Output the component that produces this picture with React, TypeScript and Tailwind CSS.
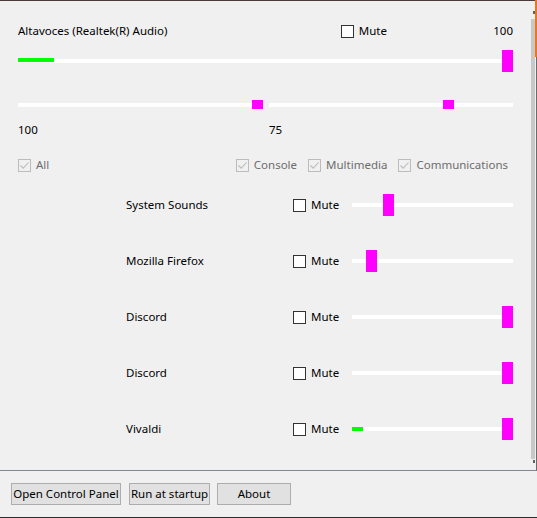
import React from 'react';

interface AppSession {
  name: string;
  thumb: number; // px offset of thumb from track start
  level?: number; // green peak bar width
}

const sessions: AppSession[] = [
  { name: 'System Sounds', thumb: 31 },
  { name: 'Mozilla Firefox', thumb: 14 },
  { name: 'Discord', thumb: 150 },
  { name: 'Discord', thumb: 150 },
  { name: 'Vivaldi', thumb: 150, level: 11 },
];

function CheckBox({ checked = false, disabled = false }: { checked?: boolean; disabled?: boolean }) {
  return (
    <span
      className={`relative inline-block w-[13px] h-[13px] shrink-0 border ${
        disabled ? 'border-[#bcbcbc] bg-[#f0f0f0]' : 'border-[#333333] bg-white'
      }`}
    >
      {checked && (
        <svg viewBox="0 0 11 11" className="absolute inset-0 w-[11px] h-[11px]">
          <path d="M1.5 5.5 L4.2 8.2 L9.5 2.5" fill="none" stroke={disabled ? '#bcbcbc' : '#333'} strokeWidth="1.1" />
        </svg>
      )}
    </span>
  );
}

function Slider({ thumb, level, thumbH = 22 }: { thumb: number; level?: number; thumbH?: number }) {
  return (
    <div className="relative w-full h-[22px] flex items-center">
      <div className="w-full h-[4px] bg-white" />
      {level !== undefined && (
        <div className="absolute left-0 top-[9px] h-[4px] bg-[#00ff00]" style={{ width: level }} />
      )}
      <div
        className="absolute top-0 w-[11px] bg-[#ff00ff]"
        style={{ left: thumb, height: thumbH }}
      />
    </div>
  );
}

export default function App() {
  return (
    <div
      className="relative w-[537px] h-[518px] bg-[#f0f0f0] text-[11.5px] text-black overflow-hidden"
      style={{ fontFamily: '"Noto Sans", "Open Sans", sans-serif' }}
    >
      <div className="h-[1px] bg-[#4b3a3a]" />

      {/* Main panel */}
      <div className="h-[470px] border-b border-[#828790] border-r border-r-[#6b6b6b] pl-[18px] pr-[23px] flex flex-col">
        {/* Device header */}
        <div className="mt-[20px] h-[20px] flex items-center">
          <span>Altavoces (Realtek(R) Audio)</span>
          <span className="ml-auto flex items-center gap-[5px] mr-[126px]">
            <CheckBox />
            <span>Mute</span>
          </span>
          <span className="absolute right-[24px]">100</span>
        </div>

        {/* Master volume */}
        <div className="mt-[9px] relative h-[22px] flex items-center">
          <div className="w-full h-[4px] bg-white" />
          <div className="absolute left-0 top-[8px] w-[36px] h-[4px] bg-[#00ff00]" />
          <div className="absolute right-0 top-0 w-[11px] h-[22px] bg-[#ff00ff]" />
        </div>

        {/* Balance */}
        <div className="mt-[28px] h-[9px] flex gap-[6px]">
          <div className="relative flex-1 flex items-center">
            <div className="w-full h-[4px] bg-white" />
            <div className="absolute right-0 top-0 w-[11px] h-[9px] bg-[#ff00ff]" />
          </div>
          <div className="relative flex-1 flex items-center">
            <div className="w-full h-[4px] bg-white" />
            <div className="absolute left-[174px] top-0 w-[11px] h-[9px] bg-[#ff00ff]" />
          </div>
        </div>
        <div className="mt-[13px] h-[16px] flex items-center">
          <span className="w-[251px]">100</span>
          <span>75</span>
        </div>

        {/* Filters */}
        <div className="mt-[18px] h-[18px] flex items-center text-[#6d6d6d]">
          <span className="flex items-center gap-[5px]">
            <CheckBox checked disabled />
            <span>All</span>
          </span>
          <span className="ml-auto mr-[5px] flex items-center gap-[11px]">
            <span className="flex items-center gap-[5px]">
              <CheckBox checked disabled />
              <span>Console</span>
            </span>
            <span className="flex items-center gap-[5px]">
              <CheckBox checked disabled />
              <span>Multimedia</span>
            </span>
            <span className="flex items-center gap-[5px]">
              <CheckBox checked disabled />
              <span>Communications</span>
            </span>
          </span>
        </div>

        {/* Sessions */}
        <div className="mt-[20px] flex flex-col gap-[34px]">
          {sessions.map((s, i) => (
            <div key={i} className="h-[22px] flex items-center">
              <span className="ml-[108px] w-[167px]">{s.name}</span>
              <span className="flex items-center gap-[5px] w-[59px]">
                <CheckBox />
                <span>Mute</span>
              </span>
              <div className="flex-1">
                <Slider thumb={s.thumb} level={s.level} />
              </div>
            </div>
          ))}
        </div>
      </div>

      {/* Scrollbar */}
      <div className="absolute right-[2px] top-[19px] w-[4px] h-[440px] bg-[#c8c8c8]" />
      <div className="absolute right-[2px] top-[11px] w-[2px] h-[3px] bg-[#606060]" />
      <div className="absolute right-[2px] top-[460px] w-[2px] h-[3px] bg-[#606060]" />
      <div className="absolute right-0 top-0 w-[2px] h-[57px] bg-[#e87722]" />

      {/* Footer */}
      <div className="h-[47px] border-b border-[#2b2b2b] pl-[11px] pt-[12px] flex items-start">
        <button className="h-[22px] w-[110px] px-0 whitespace-nowrap bg-[#e1e1e1] border border-[#adadad] text-[11.5px]">
          Open Control Panel
        </button>
        <button className="ml-[8px] h-[22px] w-[81px] px-0 whitespace-nowrap bg-[#e1e1e1] border border-[#adadad] text-[11.5px]">
          Run at startup
        </button>
        <button className="ml-[7px] h-[22px] w-[74px] px-0 whitespace-nowrap bg-[#e1e1e1] border border-[#adadad] text-[11.5px]">
          About
        </button>
      </div>
    </div>
  );
}
